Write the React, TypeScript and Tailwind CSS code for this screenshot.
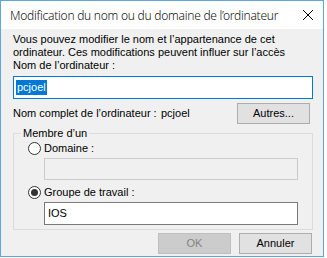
import React from 'react';

function Radio({ checked }: { checked?: boolean }) {
  return (
    <span className="flex h-[13px] w-[13px] items-center justify-center rounded-full border border-[#333333] bg-white">
      {checked && <span className="h-[7px] w-[7px] rounded-full bg-[#333333]" />}
    </span>
  );
}

export default function App() {
  return (
    <div className="h-[258px] w-[327px] bg-white">
      <div
        className="flex h-[257px] w-[324px] flex-col border border-[#5fa5e0] bg-[#f0f0f0] text-[11px] leading-[13px] text-black"
        style={{ fontFamily: '"Liberation Sans", Arial, sans-serif' }}
      >
        {/* title bar */}
        <div className="flex h-[28px] shrink-0 items-center justify-between bg-white pl-[9px] pr-[8px]">
          <span className="text-[12px] font-light tracking-[-0.25px] text-[#111]" style={{ fontFamily: '"Noto Sans", sans-serif' }}>
            Modification du nom ou du domaine de l’ordinateur
          </span>
          <svg width="12" height="12" viewBox="0 0 12 12" className="mr-[1px]">
            <path d="M1 1L11 11M11 1L1 11" stroke="#000" strokeWidth="1" />
          </svg>
        </div>

        <div className="flex w-[312px] flex-col pl-[12px] pt-[4px]">
          <p>
            Vous pouvez modifier le nom et l’appartenance de cet
            <br />
            ordinateur. Ces modifications peuvent influer sur l’accès
          </p>
          <p>Nom de l’ordinateur :</p>
          <div className="mt-[4px] flex h-[23px] items-center border border-[#0078d7] bg-white px-[2px]">
            <span className="bg-[#0078d7] px-[1px] leading-[15px] text-white">pcjoel</span>
          </div>

          <div className="mt-[4px] flex h-[21px] items-center">
            <span className="w-[148px]">Nom complet de l’ordinateur :</span>
            <span className="flex-1">pcjoel</span>
            <button className="mr-[3px] h-[21px] w-[73px] border border-[#adadad] bg-[#e1e1e1]">Autres...</button>
          </div>

          <fieldset className="mt-[3px] border border-[#dcdcdc] pb-[4px]">
            <legend className="ml-[7px] px-[2px]">Membre d’un</legend>
            <label className="mt-[2px] ml-[14px] flex items-center gap-[3px]">
              <Radio />
              <span>Domaine :</span>
            </label>
            <div className="mt-[3px] ml-[30px] h-[22px] w-[254px] border border-[#cccccc] bg-[#f0f0f0]" />
            <label className="mt-[6px] ml-[14px] flex items-center gap-[3px]">
              <Radio checked />
              <span>Groupe de travail :</span>
            </label>
            <div className="mt-[3px] ml-[30px] flex h-[23px] w-[254px] items-center border border-[#7a7a7a] bg-white px-[3px]">
              IOS
            </div>
          </fieldset>

          <div className="mt-[3px] flex justify-end gap-[8px] pr-[1px]">
            <button className="h-[21px] w-[73px] border border-[#bfbfbf] bg-[#cccccc] text-[#838383]">OK</button>
            <button className="h-[21px] w-[73px] border border-[#adadad] bg-[#e1e1e1]">Annuler</button>
          </div>
        </div>
      </div>
    </div>
  );
}
